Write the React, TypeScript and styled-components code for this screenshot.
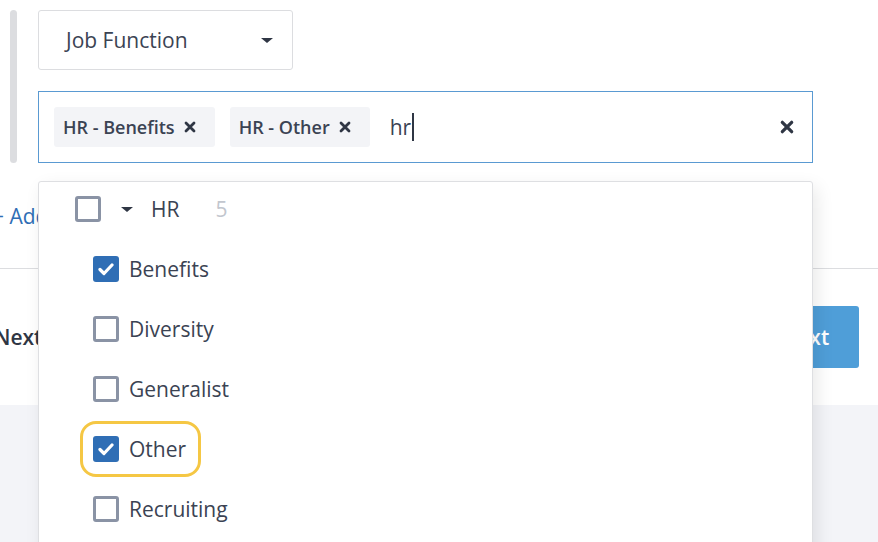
import React, { FC } from 'react'
import styled, { createGlobalStyle } from 'styled-components'

const GlobalStyle = createGlobalStyle`
  html, body {
    margin: 0;
    padding: 0;
    background: #ffffff;
    font-family: "Open Sans", "Noto Sans", sans-serif;
    color: #3b4353;
  }
  * {
    box-sizing: border-box;
  }
`

const StyledPage = styled.div`
  width: 878px;
  height: 542px;
  overflow: hidden;
  display: flex;
  flex-direction: column;
`

const StyledTop = styled.div`
  padding: 10px 0 0 10px;
`

const StyledGroup = styled.div`
  display: flex;
  align-items: flex-start;
`

const StyledGroupBar = styled.div`
  width: 7px;
  height: 153px;
  border-radius: 4px;
  background-color: #dcdde0;
  flex-shrink: 0;
`

const StyledFilters = styled.div`
  display: flex;
  flex-direction: column;
  gap: 21px;
  margin-left: 21px;
`

const StyledSelect = styled.div`
  width: 255px;
  height: 60px;
  border: 1px solid #dcdde0;
  border-radius: 3px;
  display: flex;
  align-items: center;
  justify-content: space-between;
  padding: 0 19px 0 27px;
  font-size: 21px;
  color: #3b4353;
`

const StyledCaret = styled.span<{ $size?: number }>`
  width: 0;
  height: 0;
  border-left: ${p => p.$size ?? 6}px solid transparent;
  border-right: ${p => p.$size ?? 6}px solid transparent;
  border-top: ${p => (p.$size ?? 6) - 1}px solid #2f3644;
`

const StyledTagInput = styled.div`
  position: relative;
  width: 775px;
  height: 72px;
  border: 1px solid #5a9ad2;
  display: flex;
  align-items: center;
  padding: 0 18px 0 15px;
`

const StyledTag = styled.span`
  display: inline-flex;
  align-items: center;
  height: 40px;
  padding: 0 19px 0 9px;
  margin-right: 15px;
  border-radius: 3px;
  background-color: #f3f4f7;
  font-size: 18px;
  font-weight: 600;
  color: #3b4353;
  white-space: nowrap;
`

const StyledTagX = styled.svg`
  margin-left: 9px;
  flex-shrink: 0;
`

const StyledQuery = styled.span`
  margin-left: 5px;
  font-size: 21px;
  color: #3b4353;
  display: inline-flex;
  align-items: center;
  flex: 1;
`

const StyledCursor = styled.span`
  display: inline-block;
  width: 2px;
  height: 28px;
  margin-left: 1px;
  background-color: #2f3644;
`

const StyledDropdown = styled.div`
  position: absolute;
  left: -1px;
  top: calc(100% + 19px);
  width: 775px;
  height: 400px;
  background: #ffffff;
  border: 1px solid #dedfe2;
  border-radius: 3px;
  box-shadow: 4px 6px 18px rgba(0, 0, 0, 0.09);
  z-index: 5;
  padding: 13px 0 0 36px;
`

const StyledParentRow = styled.div`
  display: flex;
  align-items: center;
  height: 28px;
  font-size: 21px;
`

const StyledCount = styled.span`
  margin-left: 36px;
  color: #c2c6ce;
`

const StyledOptionList = styled.div`
  display: flex;
  flex-direction: column;
  margin-top: 30px;
  padding-left: 18px;
  gap: 28px;
`

const StyledOption = styled.div<{ $focused?: boolean }>`
  position: relative;
  display: flex;
  align-items: center;
  height: 32px;
  width: fit-content;
  font-size: 21px;
  color: #3b4353;

  &::after {
    content: '';
    display: ${p => (p.$focused ? 'block' : 'none')};
    position: absolute;
    inset: -12px -15px -12px -13px;
    border: 3px solid #f5c744;
    border-radius: 16px;
  }
`

const StyledBox = styled.span<{ $checked?: boolean }>`
  width: 26px;
  height: 26px;
  border-radius: 3px;
  flex-shrink: 0;
  display: inline-flex;
  align-items: center;
  justify-content: center;
  margin-right: 10px;
  background-color: ${p => (p.$checked ? '#2f6eb5' : '#ffffff')};
  border: ${p => (p.$checked ? 'none' : '3px solid #8a93a5')};
`

const StyledParentCaret = styled.span`
  margin: 0 18px 0 10px;
  display: inline-flex;
`

const StyledAddLink = styled.a`
  margin: 40px 0 0 -8px;
  font-size: 21px;
  color: #2f6eb5;
  text-decoration: none;
  line-height: 26px;
`

const StyledDivider = styled.hr`
  margin: 39px 0 0;
  border: none;
  border-top: 1px solid #dcdde0;
`

const StyledFooter = styled.div`
  height: 136px;
  display: flex;
  align-items: center;
  justify-content: space-between;
  padding: 0 19px 0 0;
`

const StyledBack = styled.span`
  margin-left: -6px;
  font-size: 21px;
  font-weight: 600;
  color: #2f3644;
`

const StyledNextButton = styled.button`
  width: 130px;
  height: 62px;
  border: none;
  border-radius: 3px;
  background-color: #4f9ed8;
  color: #ffffff;
  font-family: inherit;
  font-size: 21px;
  font-weight: 600;
  padding: 0 0 0 22px;
`

const StyledGreyArea = styled.div`
  flex: 1;
  background-color: #f3f4f8;
`

const Check: FC = () => (
  <svg width="16" height="13" viewBox="0 0 16 13">
    <path d="M2 6.5 L6 10.5 L14 2" fill="none" stroke="#fff" strokeWidth="3.2" strokeLinecap="round" strokeLinejoin="round" />
  </svg>
)

const Cross: FC<{ size?: number }> = ({ size = 12 }) => (
  <StyledTagX width={size} height={size} viewBox="0 0 12 12">
    <path d="M2 2 L10 10 M10 2 L2 10" stroke="#2f3644" strokeWidth="2.8" strokeLinecap="round" />
  </StyledTagX>
)

const options = [
  { label: 'Benefits', checked: true },
  { label: 'Diversity', checked: false },
  { label: 'Generalist', checked: false },
  { label: 'Other', checked: true, focused: true },
  { label: 'Recruiting', checked: false },
]

const App: FC = () => {
  return (
    <StyledPage>
      <GlobalStyle />
      <StyledTop>
        <StyledGroup>
          <StyledGroupBar />
          <StyledFilters>
            <StyledSelect>
              Job Function
              <StyledCaret />
            </StyledSelect>

            <StyledTagInput>
              <StyledTag>HR - Benefits<Cross /></StyledTag>
              <StyledTag>HR - Other<Cross /></StyledTag>
              <StyledQuery>
                hr<StyledCursor />
              </StyledQuery>
              <Cross size={14} />

              <StyledDropdown>
                <StyledParentRow>
                  <StyledBox />
                  <StyledParentCaret><StyledCaret /></StyledParentCaret>
                  HR
                  <StyledCount>5</StyledCount>
                </StyledParentRow>

                <StyledOptionList>
                  {options.map(option => (
                    <StyledOption key={option.label} $focused={option.focused}>
                      <StyledBox $checked={option.checked}>
                        {option.checked && <Check />}
                      </StyledBox>
                      {option.label}
                    </StyledOption>
                  ))}
                </StyledOptionList>
              </StyledDropdown>
            </StyledTagInput>
          </StyledFilters>
        </StyledGroup>
      </StyledTop>

      <StyledAddLink href="#">+ Add filter</StyledAddLink>
      <StyledDivider />

      <StyledFooter>
        <StyledBack>Next</StyledBack>
        <StyledNextButton>Next</StyledNextButton>
      </StyledFooter>

      <StyledGreyArea />
    </StyledPage>
  )
}

export default App
